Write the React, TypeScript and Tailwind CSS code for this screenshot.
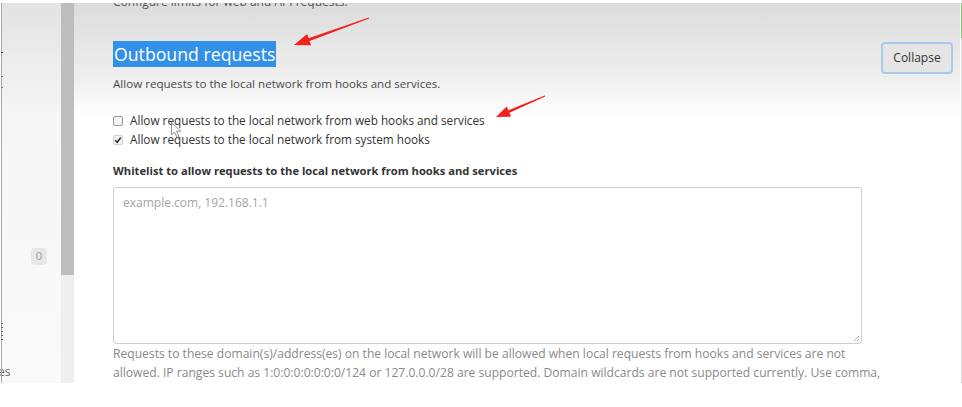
import React from "react";

const font = { fontFamily: '"Open Sans", "Noto Sans", sans-serif' };

function Annotations() {
  // red arrows + mouse cursor drawn over the screenshot
  return (
    <svg className="absolute inset-0 pointer-events-none" width="962" height="407" viewBox="0 0 962 407">
      <polygon
        points="294,45 311.1,45.2 309.6,41 369.2,18.5 368.8,17.5 308.6,38.2 307.1,33.9"
        fill="#f4201c"
      />
      <polygon
        points="496,117 511.1,116.6 509.4,112.7 545.2,96.5 544.8,95.5 508.4,110.3 506.7,106.4"
        fill="#f4201c"
      />
      <path
        d="M171.5 122.5 L171.5 135 L174.5 132 L177 137.5 L179 136.6 L176.6 131.2 L180.8 131.2 Z"
        fill="#fff"
        fillOpacity="0.6"
        stroke="#777"
        strokeWidth="0.8"
      />
    </svg>
  );
}

function Check({ checked }: { checked?: boolean }) {
  return (
    <span
      className={
        "flex h-[10px] w-[10px] items-center justify-center rounded-[2px] border " +
        (checked ? "border-[#d0d0d0] bg-[#f2f2f2]" : "border-[#9a9a9a] bg-[#f4f4f4]")
      }
    >
      {checked && (
        <svg width="8" height="8" viewBox="0 0 8 8">
          <path d="M1.2 4.2 L3.2 6.2 L6.8 1.6" fill="none" stroke="#333" strokeWidth="1.6" />
        </svg>
      )}
    </span>
  );
}

export default function App() {
  return (
    <div className="relative h-[407px] w-[962px] overflow-hidden bg-white" style={font}>
      <div className="relative z-10 h-[3px] bg-white" />
      <div className="flex h-[380px] overflow-hidden">
        <div className="w-[1px] bg-white" />
        <div className="relative w-[1px] bg-[#a8a8a8]">
          <span className="absolute left-0 top-[49px] h-[1px] w-[2px] bg-[#444]" />
          <span className="absolute left-0 top-[73px] h-[1px] w-[2px] bg-[#777]" />
          <span className="absolute left-0 top-[84px] h-[1px] w-[2px] bg-[#777]" />
          <span className="absolute left-0 top-[320px] h-[1px] w-[2px] bg-[#666]" />
          <span className="absolute left-0 top-[324px] h-[1px] w-[2px] bg-[#666]" />
          <span className="absolute left-0 top-[328px] h-[1px] w-[2px] bg-[#666]" />
          <span className="absolute left-0 top-[332px] h-[1px] w-[2px] bg-[#666]" />
          <span className="absolute left-0 top-[336px] h-[1px] w-[2px] bg-[#666]" />
        </div>
        {/* left sidebar */}
        <div className="flex w-[59px] flex-col bg-gradient-to-b from-[#e3e3e3] via-[#f6f6f6] via-30% to-[#fafafa]">
          <div className="h-[245px]" />
          <div className="ml-[29px] flex h-[17px] w-[16px] items-center justify-center rounded-[4px] bg-[#e7e7e7] text-[11px] text-[#999]">
            0
          </div>
          <div className="flex-1" />
          <div className="-ml-[4px] mb-[2px] text-[12px] text-[#666]">es</div>
        </div>
        {/* scrollbar */}
        <div className="flex w-[13px] flex-col">
          <div className="h-[272px] bg-[#bdbdbd]" />
          <div className="flex-1 bg-[#efefef]" />
        </div>
        {/* main panel */}
        <div className="flex w-[886px] flex-col bg-gradient-to-b from-[#dcdcdc] via-[#efefef] via-20% to-white to-30%">
          <div className="-mt-[10px] pl-[39px] text-[12px] text-[#555]">Configure limits for web and API requests.</div>
          <div className="ml-[39px] mt-[14px] mr-[5px] h-[1px] bg-[#c6c6c6]" />
          <div className="flex items-start pl-[39px] pr-[7px] pt-[16px]">
            <div className="flex-1">
              <h2 className="inline-block bg-[#3390e8] px-[1px] text-[17.7px] leading-[26px] text-white">Outbound requests</h2>
              <p className="mt-[8px] text-[11.6px] leading-[18px] text-[#4a4a4a]">
                Allow requests to the local network from hooks and services.
              </p>
            </div>
            <button className="mt-[1px] h-[32px] w-[72px] rounded-[4px] border-2 border-[#a9c8ec] bg-[#e5e5e5] text-[12px] text-[#333]">
              Collapse
            </button>
          </div>
          <div className="pl-[39px]">
            <label className="mt-[18px] flex items-center gap-[7px] text-[11.75px] leading-[19px] text-[#333]">
              <Check />
              Allow requests to the local network from web hooks and services
            </label>
            <label className="flex items-center gap-[7px] text-[11.75px] leading-[19px] text-[#333]">
              <Check checked />
              Allow requests to the local network from system hooks
            </label>
            <div className="mt-[13px] text-[11.2px] font-bold leading-[18px] text-[#333]">
              Whitelist to allow requests to the local network from hooks and services
            </div>
            <div className="relative mt-[7px] h-[157px] w-[749px] rounded-[3px] border border-[#cfcfcf] bg-white px-[9px] py-[6px] text-[12px] text-[#a5a5a5]">
              example.com, 192.168.1.1
              <svg className="absolute bottom-[1px] right-[1px]" width="8" height="8" viewBox="0 0 8 8">
                <path d="M7 2 L2 7 M7 5 L5 7" stroke="#999" strokeWidth="0.8" />
              </svg>
            </div>
            <p className="mt-[0px] w-[772px] text-[12.1px] leading-[19px] text-[#8a8a8a]">
              Requests to these domain(s)/address(es) on the local network will be allowed when local requests from hooks and services are not allowed. IP ranges such as 1:0:0:0:0:0:0:0/124 or 127.0.0.0/28 are supported. Domain wildcards are not supported currently. Use comma, semicolon, or newline to separate multiple entries.
            </p>
          </div>
        </div>
        <div className="w-[1px] bg-white" />
        <div className="relative w-[1px] bg-[#dedede]">
          <span className="absolute left-0 top-0 h-[35px] w-[1px] bg-[#7ccd6a]" />
        </div>
        <div className="flex-1 bg-white" />
      </div>
      <Annotations />
    </div>
  );
}
